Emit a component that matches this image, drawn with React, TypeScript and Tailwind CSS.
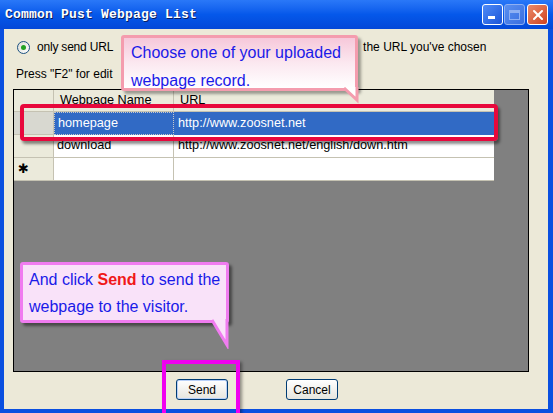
import { X } from "lucide-react";

const ui = { fontFamily: '"Liberation Sans", Arial, sans-serif' };
const callout = { fontFamily: '"Liberation Sans", Arial, sans-serif' };

function Radio() {
  return (
    <span className="flex h-[13px] w-[13px] items-center justify-center rounded-full border border-[#1c5180] bg-gradient-to-br from-[#dcdcd6] to-white">
      <span className="h-[5px] w-[5px] rounded-full bg-[#21a121]" />
    </span>
  );
}

function XpButton({ label, focused }: { label: string; focused?: boolean }) {
  return (
    <div
      className={`flex h-[21px] w-[52px] items-center justify-center rounded-[3px] border border-[#003c74] bg-gradient-to-b from-white to-[#e6e5de] text-[12px] text-black ${
        focused ? "shadow-[inset_0_0_0_1px_#b8d0f8]" : ""
      }`}
    >
      {label}
    </div>
  );
}

function TitleButtons() {
  return (
    <div className="ml-auto flex gap-[1px] pr-[5px]">
      <div className="flex h-[21px] w-[21px] items-end rounded-[3px] border border-white bg-gradient-to-br from-[#4f8bf7] to-[#1b54d8] px-[5px] pb-[5px]">
        <span className="h-[3px] w-[7px] bg-white" />
      </div>
      <div className="flex h-[21px] w-[21px] items-center justify-center rounded-[3px] border border-[#8fb0f3] bg-gradient-to-br from-[#5a8ff0] to-[#3a6ee0]">
        <span className="h-[10px] w-[11px] border border-t-[3px] border-[#8fb0f3]" />
      </div>
      <div className="ml-[1px] flex h-[21px] w-[21px] items-center justify-center rounded-[3px] border border-white bg-gradient-to-br from-[#e98a6a] to-[#d0401c]">
        <X size={16} strokeWidth={3} className="text-white" />
      </div>
    </div>
  );
}

const rows = [
  { name: "homepage", url: "http://www.zoosnet.net", selected: true },
  { name: "download", url: "http://www.zoosnet.net/english/down.htm" },
  { name: "", url: "", marker: "✱" },
];

function Grid() {
  return (
    <div className="ml-[9px] mt-[7px] h-[283px] w-[516px] border border-black bg-[#808080]" style={ui}>
      <div className="w-[480px] bg-white text-[12.7px]">
        <div className="flex h-[22px] bg-[#ebeadb] text-black">
          <div className="w-[40px] border-b border-r border-[#c5c2b2]" />
          <div className="flex w-[120px] items-center border-b border-r border-[#c5c2b2] pl-[6px]">Webpage Name</div>
          <div className="flex flex-1 items-center border-b border-[#c5c2b2] pl-[6px]">URL</div>
        </div>
        {rows.map((r, i) => (
          <div key={i} className="flex h-[23px]">
            <div
              className={`flex w-[40px] items-center border-b border-r border-[#c5c2b2] pl-[4px] text-[13px] ${
                r.selected ? "bg-[#d8d8d0]" : "bg-[#ebeadb]"
              }`}
              style={{ fontFamily: '"DejaVu Sans", sans-serif' }}
            >
              {r.marker}
            </div>
            <div
              className={`flex w-[120px] items-center border-r pl-[3px] ${
                r.selected
                  ? "border border-dotted border-[#c8c8c8] bg-[#316ac5] text-white"
                  : "border-b border-[#c5c2b2] text-black"
              }`}
            >
              {r.name}
            </div>
            <div
              className={`flex flex-1 items-center pl-[4px] ${
                r.selected ? "bg-[#316ac5] text-white" : "border-b border-[#c5c2b2] text-black"
              }`}
            >
              {r.url}
            </div>
          </div>
        ))}
      </div>
    </div>
  );
}

export default function App() {
  return (
    <div className="relative flex h-[413px] w-[553px] flex-col overflow-hidden bg-[#0a4fe0]">
      <div className="flex h-[29px] items-center bg-gradient-to-b from-[#2a78f8] via-[#0558ea] to-[#0448d8] pl-[5px]">
        <span
          className="text-[13px] font-bold tracking-[0.2px] text-white [text-shadow:1px_1px_0_#0a1e60]"
          style={{ fontFamily: '"Liberation Mono", monospace' }}
        >
          Common Pust Webpage List
        </span>
        <TitleButtons />
      </div>

      <div className="mb-[4px] ml-[4px] mr-[5px] flex flex-1 flex-col bg-[#ece9d8]" style={ui}>
        <div className="mt-[8px] flex h-[20px] items-center pl-[13px] text-[12px] text-black">
          <Radio />
          <span className="ml-[7px] tracking-[-0.2px]">only send URL</span>
          <span className="ml-[250px]">the URL you've chosen</span>
        </div>
        <div className="mt-[9px] flex h-[16px] items-center pl-[12px] text-[12px] text-black">Press "F2" for edit</div>
        <Grid />
        <div className="mt-[7px] flex pl-[172px]">
          <XpButton label="Send" focused />
          <div className="ml-[58px]">
            <XpButton label="Cancel" />
          </div>
        </div>
      </div>

      {/* highlight around the first row */}
      <div className="absolute left-[20px] top-[104px] h-[37px] w-[478px] rounded-[4px] border-[4px] border-[#e8083c] shadow-[2px_3px_3px_rgba(0,0,0,0.45)]" />

      {/* highlight around Send */}
      <div className="absolute left-[162px] top-[360px] h-[58px] w-[78px] border-[4px] border-[#f000f0] shadow-[2px_2px_3px_rgba(0,0,0,0.4)]" />

      {/* callout 1 */}
      <div className="absolute left-[121px] top-[35px] h-[56px] w-[237px]" style={callout}>
        <div className="h-full w-full rounded-[3px] border-[3px] border-[#f49cae] bg-gradient-to-b from-[#f6c8da] via-[#fbe8f0] to-white pl-[7px] pt-[1px] text-[16px] leading-[28px] text-[#1a1ae8] shadow-[3px_3px_3px_rgba(0,0,0,0.35)]">
          <div>Choose one of your uploaded</div>
          <div>webpage record.</div>
        </div>
        <svg className="absolute left-[222px] top-[52px]" width="18" height="18" viewBox="0 0 18 18">
          <polygon points="1,0 15,0 15,14" fill="#ffffff" />
          <polyline points="1,1 14,13 14,0" fill="none" stroke="#f49cae" strokeWidth="3" />
        </svg>
      </div>

      {/* callout 2 */}
      <div className="absolute left-[20px] top-[262px] h-[61px] w-[209px]" style={callout}>
        <div className="h-full w-full rounded-[3px] border-[3px] border-[#f07cf0] bg-[#f9e2f9] pl-[6px] pt-[1px] text-[16px] leading-[27px] text-[#1a1ae8] shadow-[3px_3px_3px_rgba(0,0,0,0.45)]">
          <div>
            And click <span className="font-bold text-[#f01818]">Send</span> to send the
          </div>
          <div>webpage to the visitor.</div>
        </div>
        <svg className="absolute left-[191px] top-[57px]" width="20" height="30" viewBox="0 0 20 30">
          <polygon points="1,0 17,0 17,27" fill="#f9e2f9" />
          <polyline points="1,1 16,26 16,0" fill="none" stroke="#f07cf0" strokeWidth="3" />
        </svg>
      </div>
    </div>
  );
}
